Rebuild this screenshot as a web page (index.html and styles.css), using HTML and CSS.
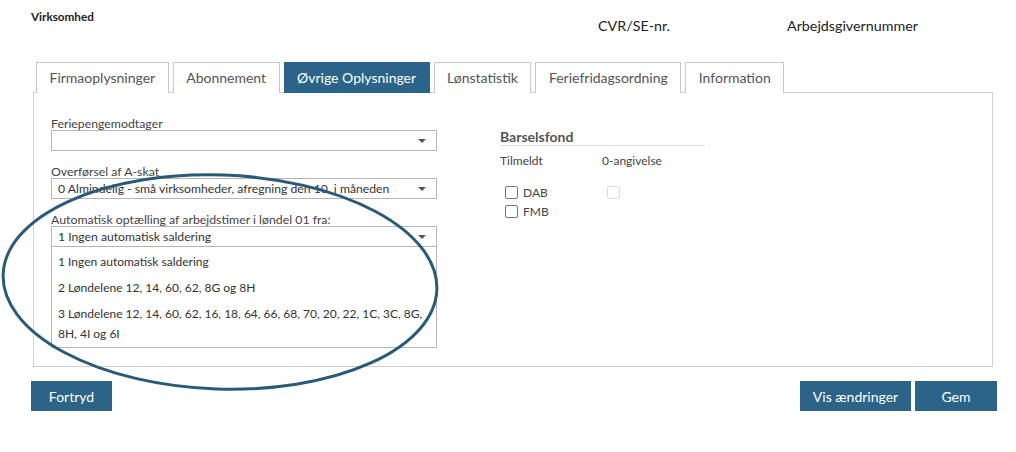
FILE: index.html
```html
<!DOCTYPE html>
<html lang="da">
<head>
<meta charset="utf-8">
<title>Virksomhed</title>
<link rel="stylesheet" href="styles.css">
</head>
<body>
<div class="page">
  <div class="header">
    <div class="title">Virksomhed</div>
    <div class="field-head">CVR/SE-nr.</div>
    <div class="field-head">Arbejdsgivernummer</div>
  </div>

  <div class="tabs">
    <div class="tab">Firmaoplysninger</div>
    <div class="tab">Abonnement</div>
    <div class="tab active">Øvrige Oplysninger</div>
    <div class="tab">Lønstatistik</div>
    <div class="tab">Feriefridagsordning</div>
    <div class="tab">Information</div>
  </div>

  <div class="panel">
    <div class="col-left">
      <div class="form-group">
        <div class="label">Feriepengemodtager</div>
        <div class="select"><span class="value"></span><span class="caret"></span></div>
      </div>
      <div class="form-group">
        <div class="label">Overførsel af A-skat</div>
        <div class="select"><span class="value">0 Almindelig - små virksomheder, afregning den 10. i måneden</span><span class="caret"></span></div>
      </div>
      <div class="form-group">
        <div class="label">Automatisk optælling af arbejdstimer i løndel 01 fra:</div>
        <div class="select open"><span class="value">1 Ingen automatisk saldering</span><span class="caret"></span></div>
        <div class="options">
          <div class="option">1 Ingen automatisk saldering</div>
          <div class="option">2 Løndelene 12, 14, 60, 62, 8G og 8H</div>
          <div class="option">3 Løndelene 12, 14, 60, 62, 16, 18, 64, 66, 68, 70, 20, 22, 1C, 3C, 8G, 8H, 4I og 6I</div>
        </div>
      </div>
    </div>

    <div class="col-right">
      <div class="section-title">Barselsfond</div>
      <div class="fund-grid">
        <div class="fund-col">
          <div class="sub-head">Tilmeldt</div>
          <label class="check"><span class="box"></span><span>DAB</span></label>
          <label class="check"><span class="box"></span><span>FMB</span></label>
        </div>
        <div class="fund-col">
          <div class="sub-head">0-angivelse</div>
          <div class="check"><span class="box disabled"></span></div>
        </div>
      </div>
    </div>
  </div>

  <div class="actions">
    <button class="btn btn-undo">Fortryd</button>
    <div class="actions-right">
      <button class="btn btn-show">Vis ændringer</button>
      <button class="btn btn-save">Gem</button>
    </div>
  </div>
</div>

<svg class="annotation" width="1016" height="452" viewBox="0 0 1016 452">
  <ellipse cx="220" cy="282" rx="217" ry="107" transform="rotate(2 220 282)" fill="none" stroke="#2b5a78" stroke-width="3"/>
</svg>
</body>
</html>
```

FILE: styles.css
```css
html, body {
  margin: 0;
  padding: 0;
  background: #fff;
}

body {
  font-family: Lato, "Open Sans", "Liberation Sans", sans-serif;
  color: #333;
  width: 1016px;
  height: 452px;
  position: relative;
  overflow: hidden;
}

.page {
  padding: 9px 19px 0 31px;
  width: 966px;
}

.header {
  display: grid;
  grid-template-columns: 567px 189px auto;
  height: 53px;
}

.title {
  font-size: 11.7px;
  font-weight: bold;
  color: #222;
  line-height: 15px;
}

.field-head {
  font-size: 14.3px;
  color: #222;
  line-height: 16px;
  margin-top: 9px;
}

.tabs {
  display: flex;
  gap: 4px;
  margin-left: 5px;
  height: 30px;
}

.tab {
  box-sizing: border-box;
  height: 31px;
  padding: 0 12.5px;
  border: 1px solid #c8c8c8;
  border-bottom: none;
  background: #fff;
  font-size: 14px;
  color: #555;
  line-height: 29px;
  position: relative;
  z-index: 1;
}

.tab.active {
  background: #2b6488;
  border-color: #2b6488;
  color: #fff;
}

.panel {
  box-sizing: border-box;
  margin-left: 2px;
  width: 960px;
  height: 275px;
  border: 1px solid #cfcfcf;
  display: flex;
  padding: 24px 0 0 17px;
}

.col-left {
  width: 386px;
}

.form-group {
  margin-bottom: 14px;
}

.label {
  font-size: 12.3px;
  line-height: 13px;
  color: #444;
}

.select {
  box-sizing: border-box;
  height: 21px;
  border: 1px solid #b5b5b5;
  display: flex;
  align-items: center;
  justify-content: space-between;
  padding: 0 8px 0 6px;
  font-size: 12.2px;
  color: #333;
  background: #fff;
}

.caret {
  width: 0;
  height: 0;
  border-left: 4.5px solid transparent;
  border-right: 4.5px solid transparent;
  border-top: 4px solid #555;
  margin-right: 2px;
}

.options {
  border: 1px solid #b5b5b5;
  border-top: none;
  padding-top: 2px;
  font-size: 12px;
  color: #333;
}

.option {
  padding: 3px 6px;
  line-height: 20px;
}

.col-right {
  margin-left: 63px;
  padding-top: 12px;
  width: 205px;
}

.section-title {
  font-size: 14px;
  font-weight: bold;
  color: #555;
  line-height: 16px;
  border-bottom: 1px solid #dedede;
}

.fund-grid {
  display: flex;
  margin-top: 8px;
}

.fund-col {
  width: 102px;
}

.sub-head {
  font-size: 12px;
  color: #444;
  line-height: 14px;
  margin-bottom: 15px;
}

.check {
  display: flex;
  align-items: center;
  gap: 5px;
  font-size: 12px;
  color: #444;
  height: 19px;
  padding-left: 5px;
}

.box {
  box-sizing: border-box;
  width: 13px;
  height: 13px;
  border: 1px solid #777;
  border-radius: 2px;
  background: #fff;
}

.box.disabled {
  border-color: #dcdcdc;
}

.actions {
  display: flex;
  justify-content: space-between;
  margin-top: 14px;
}

.actions-right {
  display: flex;
  gap: 4px;
}

.btn {
  height: 30px;
  border: none;
  background: #2b6488;
  color: #fff;
  font-family: Lato, "Open Sans", "Liberation Sans", sans-serif;
  font-size: 14px;
  padding: 0;
  cursor: pointer;
}

.btn-undo { width: 81px; }
.btn-show { width: 111px; }
.btn-save { width: 82px; }

.annotation {
  position: absolute;
  top: 0;
  left: 0;
  pointer-events: none;
}
```
